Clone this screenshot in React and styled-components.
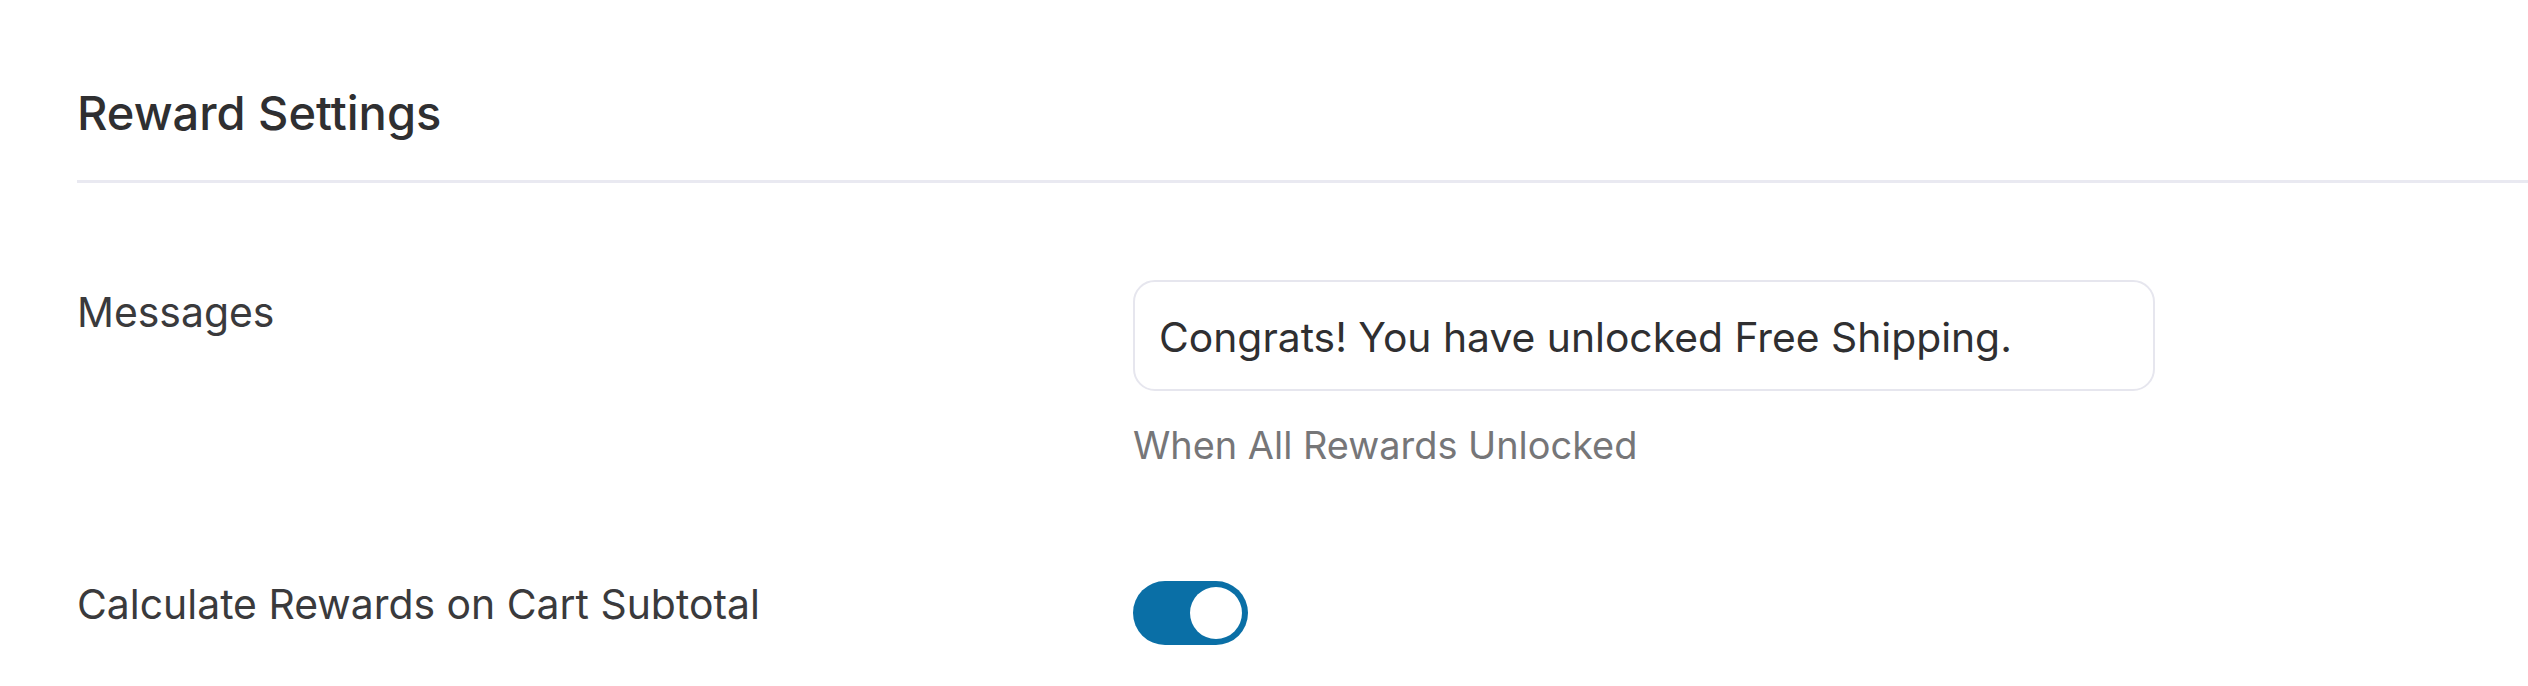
import React from "react";
import styled, { createGlobalStyle } from "styled-components";

const Global = createGlobalStyle`
  html, body { margin: 0; padding: 0; background: #ffffff; }
  body { font-family: Inter, "Noto Sans", sans-serif; color: #3a3a3c; }
  * { box-sizing: border-box; }
`;

const Page = styled.div`
  padding-left: 77px;
  width: 2528px;
`;

const Header = styled.div`
  padding-top: 85px;
  padding-bottom: 39px;
  border-bottom: 3px solid #e9e9f1;
`;

const Title = styled.h2`
  margin: 0;
  font-size: 47px;
  line-height: 1.2;
  font-weight: 500;
  color: #2f2f31;
`;

const Row = styled.div`
  display: grid;
  grid-template-columns: 1056px 1022px;
  align-items: start;
  padding-top: ${(p) => p.$top}px;
`;

const Label = styled.div`
  font-size: 40.9px;
  line-height: 1.2;
  color: #3a3a3c;
  margin-top: ${(p) => p.$offset}px;
`;

const Field = styled.div`
  display: flex;
  flex-direction: column;
  align-items: flex-start;
`;

const TextInput = styled.input`
  width: 1022px;
  height: 111px;
  border: 2px solid #e6e6ee;
  border-radius: 22px;
  padding: 2px 24px 0;
  font-family: Inter, "Noto Sans", sans-serif;
  font-size: 40.8px;
  color: #2f2f31;
  background: #fff;
  outline: none;
`;

const Help = styled.div`
  margin-top: 32px;
  font-size: 37.9px;
  line-height: 1.2;
  color: #767678;
`;

const Toggle = styled.div`
  width: 115px;
  height: 64px;
  border-radius: 32px;
  background: #0a6fa6;
  padding: 6px;
  display: flex;
  justify-content: ${(p) => (p.$on ? "flex-end" : "flex-start")};
`;

const Knob = styled.span`
  width: 52px;
  height: 52px;
  border-radius: 50%;
  background: #ffffff;
`;

export default function App() {
  return (
    <>
      <Global />
      <Page>
        <Header>
          <Title>Reward Settings</Title>
        </Header>
        <Row $top={97}>
          <Label $offset={8}>Messages</Label>
          <Field>
            <TextInput readOnly defaultValue="Congrats! You have unlocked Free Shipping." />
            <Help>When All Rewards Unlocked</Help>
          </Field>
        </Row>
        <Row $top={112}>
          <Label $offset={-1}>Calculate Rewards on Cart Subtotal</Label>
          <Field>
            <Toggle $on>
              <Knob />
            </Toggle>
          </Field>
        </Row>
      </Page>
    </>
  );
}
